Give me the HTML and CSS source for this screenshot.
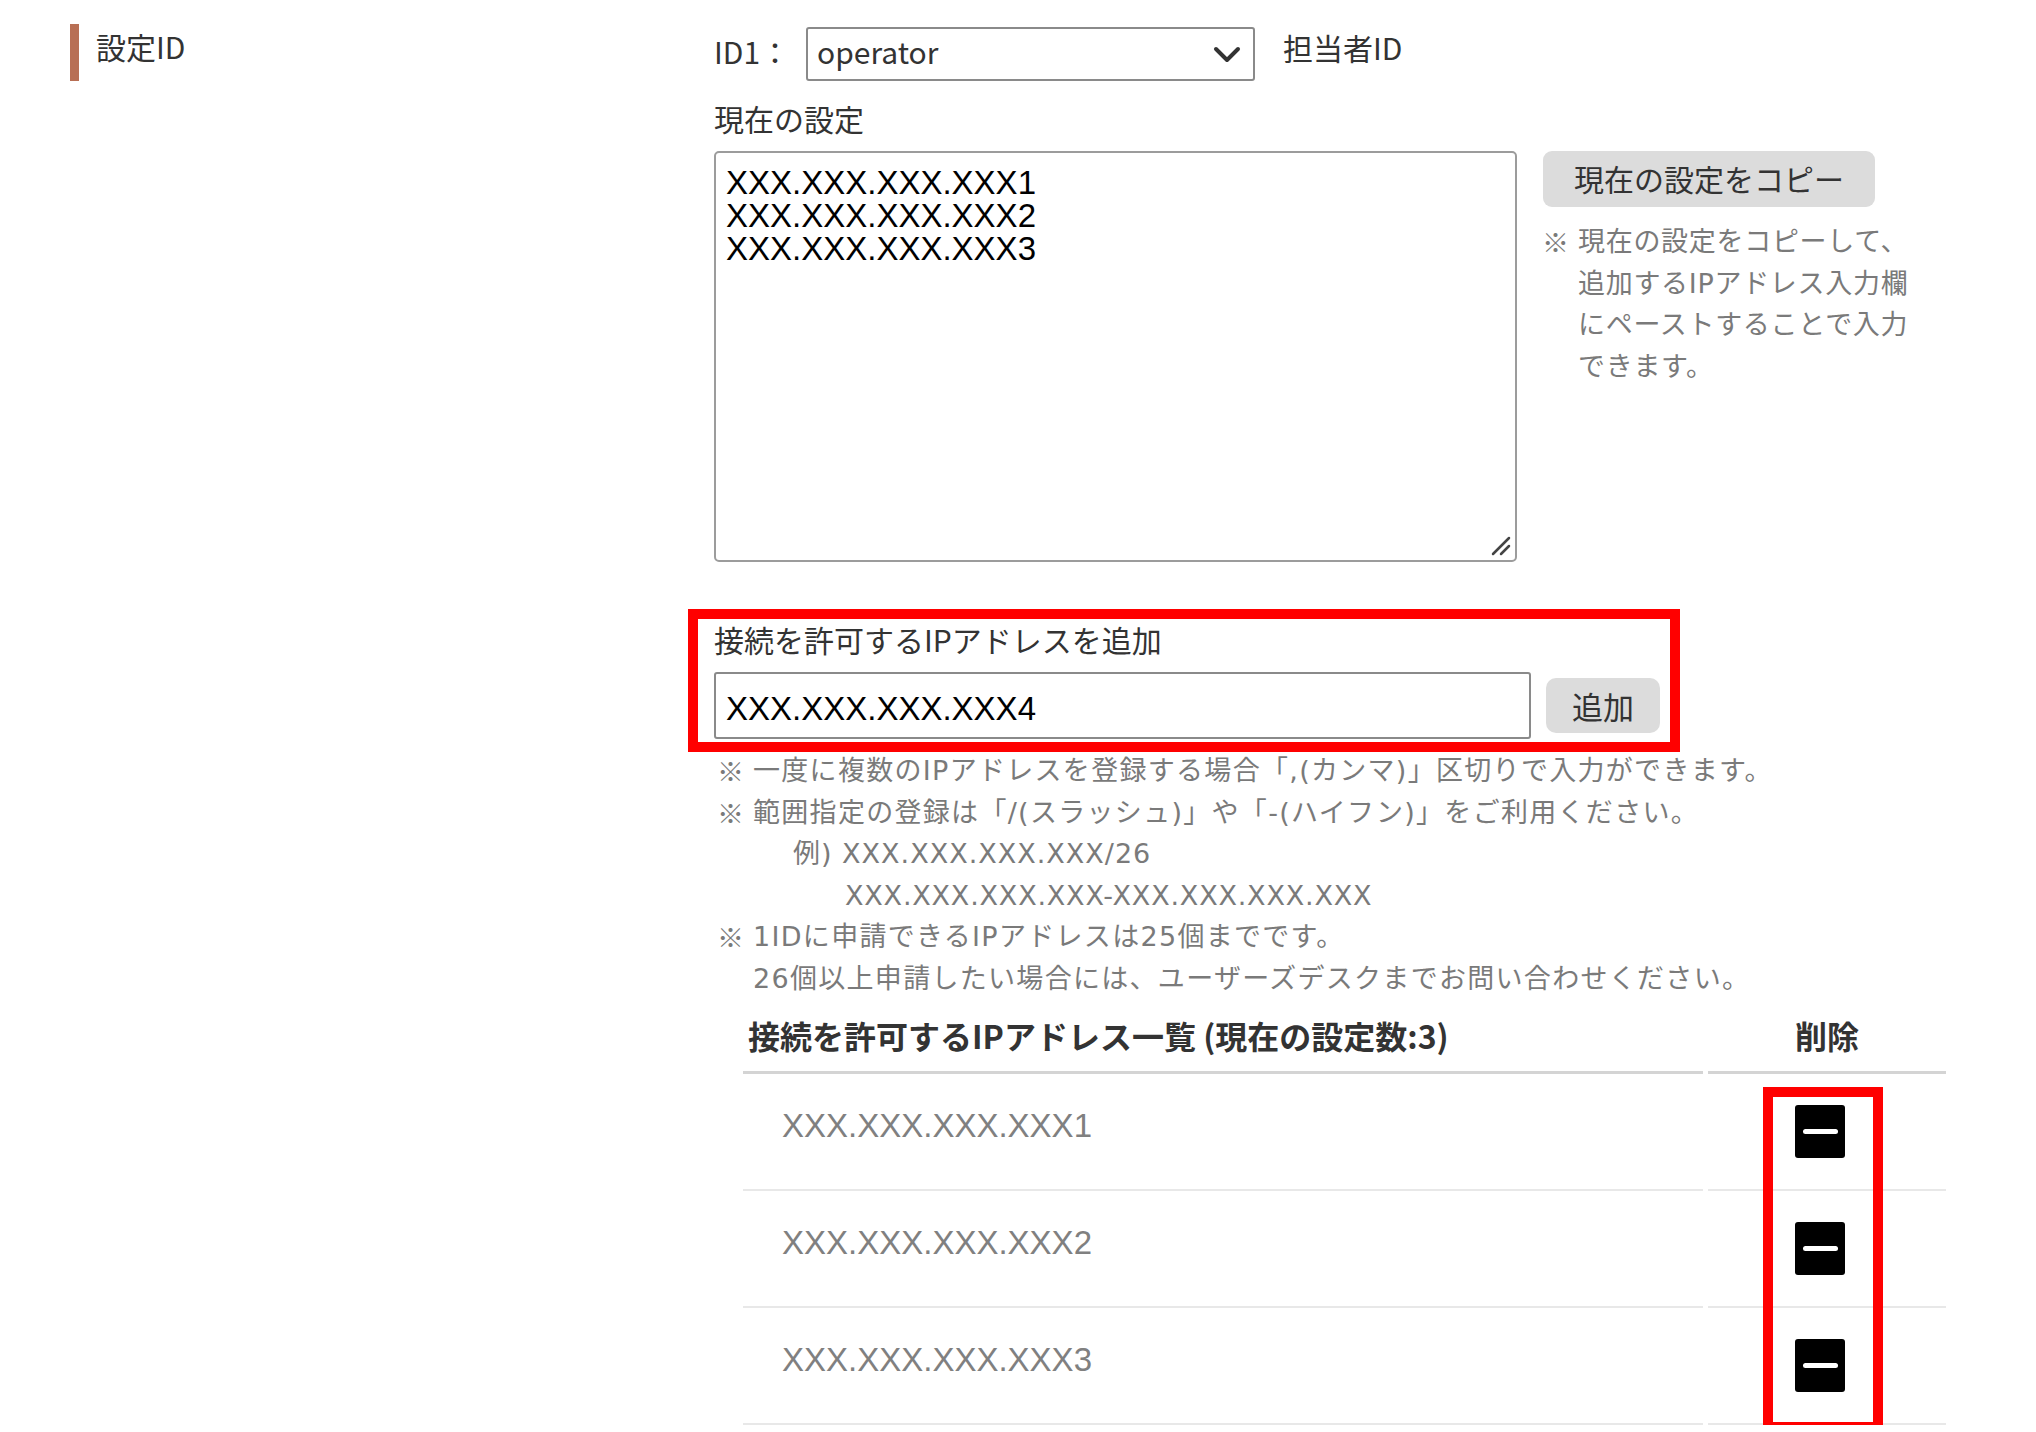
FILE: index.html
```html
<!DOCTYPE html>
<html lang="ja">
<head>
    <meta charset="UTF-8">
    <title>接続を許可するIPアドレス設定</title>
    <link rel="stylesheet" href="styles.css">
</head>
<body>
    <div class="page">
        <div class="side">
            <h2 class="section-title">設定ID</h2>
        </div>

        <div class="main">
            <div class="id-row">
                <span class="id-label">ID1：</span>
                <div class="select-wrap">
                    <select class="id-select">
                        <option>operator</option>
                    </select>
                    <svg class="chevron" width="28" height="17" viewBox="0 0 28 17">
                        <polyline points="3,3 14,14 25,3" fill="none" stroke="#333" stroke-width="4" stroke-linecap="round" stroke-linejoin="round"/>
                    </svg>
                </div>
                <span class="id-note">担当者ID</span>
            </div>

            <div class="field-label">現在の設定</div>
            <div class="current-row">
                <div class="list-wrap">
                    <textarea class="current-list" readonly>XXX.XXX.XXX.XXX1
XXX.XXX.XXX.XXX2
XXX.XXX.XXX.XXX3</textarea>
                    <svg class="grip" width="22" height="22" viewBox="0 0 22 22">
                        <line x1="4" y1="20" x2="20" y2="4" stroke="#444" stroke-width="2.5" stroke-linecap="round"/>
                        <line x1="12" y1="20" x2="20" y2="12" stroke="#444" stroke-width="2.5" stroke-linecap="round"/>
                    </svg>
                </div>
                <div class="copy-col">
                    <button class="btn copy-btn">現在の設定をコピー</button>
                    <p class="side-note">
                        <span class="mark">※</span>
                        <span>現在の設定をコピーして、<br>追加するIPアドレス入力欄<br>にペーストすることで入力<br>できます。</span>
                    </p>
                </div>
            </div>

            <div class="add-box">
                <div class="add-label">接続を許可するIPアドレスを追加</div>
                <div class="add-row">
                    <input class="add-input" type="text" value="XXX.XXX.XXX.XXX4">
                    <button class="btn add-btn">追加</button>
                </div>
            </div>

            <ul class="notes">
                <li><span class="mark">※</span><span>一度に複数のIPアドレスを登録する場合「,(カンマ)」区切りで入力ができます。</span></li>
                <li><span class="mark">※</span><span>範囲指定の登録は「/(スラッシュ)」や「-(ハイフン)」をご利用ください。</span></li>
                <li class="ex">例) XXX.XXX.XXX.XXX/26</li>
                <li class="ex-cont">XXX.XXX.XXX.XXX-XXX.XXX.XXX.XXX</li>
                <li><span class="mark">※</span><span>1IDに申請できるIPアドレスは25個までです。</span></li>
                <li class="cont">26個以上申請したい場合には、ユーザーズデスクまでお問い合わせください。</li>
            </ul>

            <div class="ip-table">
                <div class="ip-row ip-head">
                    <div class="cell">接続を許可するIPアドレス一覧 (現在の設定数:3)</div>
                    <div class="cell del-cell">削除</div>
                </div>
                <div class="ip-row">
                    <div class="cell ip-cell">XXX.XXX.XXX.XXX1</div>
                    <div class="cell del-cell"><button class="del"><span></span></button></div>
                </div>
                <div class="ip-row">
                    <div class="cell ip-cell">XXX.XXX.XXX.XXX2</div>
                    <div class="cell del-cell"><button class="del"><span></span></button></div>
                </div>
                <div class="ip-row">
                    <div class="cell ip-cell">XXX.XXX.XXX.XXX3</div>
                    <div class="cell del-cell"><button class="del"><span></span></button></div>
                </div>
                <div class="highlight"></div>
            </div>
        </div>
    </div>
</body>
</html>
```

FILE: styles.css
```css
body { margin: 0; background: #fff; color: #333; font-family: "Noto Sans CJK JP", "Noto Sans", sans-serif; }
.page { display: grid; grid-template-columns: 644px 1fr; padding: 24px 0 0 70px; }

.section-title { margin: 0; height: 57px; border-left: 9px solid #b86f54; padding-left: 17px; font-size: 30px; font-weight: normal; line-height: 45px; }

.id-row { display: flex; align-items: center; height: 60px; font-size: 30px; }
.id-label { width: 92px; padding-bottom: 7px; }
.select-wrap { position: relative; }
.id-select { width: 449px; height: 54px; box-sizing: border-box; border: 2px solid #8a8a8a; border-radius: 3px; padding: 0 50px 6px 9px; background: #fff; color: #333; font-family: inherit; font-size: 30px; appearance: none; -webkit-appearance: none; }
.chevron { position: absolute; right: 14px; top: 19px; pointer-events: none; }
.id-note { margin-left: 28px; padding-bottom: 14px; }

.field-label { margin-top: 12px; font-size: 30px; line-height: 45px; }

.current-row { display: flex; align-items: flex-start; gap: 26px; margin-top: 10px; }
.list-wrap { position: relative; }
.current-list { display: block; width: 803px; height: 411px; box-sizing: border-box; border: 2px solid #9c9c9c; border-radius: 5px; padding: 13px 10px; margin: 0; resize: none; font-family: "Liberation Sans", Arial, sans-serif; font-size: 33px; line-height: 33px; color: #000; }
.grip { position: absolute; right: 6px; bottom: 6px; }
.copy-col { width: 420px; }
.btn { border: none; background: #dcdcdc; color: #333; font-family: inherit; cursor: pointer; }
.copy-btn { width: 332px; height: 56px; border-radius: 9px; font-size: 30px; padding-bottom: 4px; }
.side-note { display: flex; margin: 14px 0 0 -1px; font-family: "DejaVu Sans", "Noto Sans CJK JP", sans-serif; font-size: 27px; line-height: 41.5px; color: #7a7a7a; white-space: nowrap; }
.mark { width: 36px; flex-shrink: 0; font-family: "Noto Sans CJK JP", sans-serif; }
.side-note .mark + span { letter-spacing: 0.7px; }

.add-box { width: 992px; box-sizing: border-box; margin: 47px 0 0 -26px; border: 10px solid #ff0000; padding: 0 10px 3px 16px; }
.add-label { font-size: 30px; line-height: 40px; }
.add-row { display: flex; align-items: center; gap: 15px; margin-top: 13px; }
.add-input { width: 817px; height: 67px; box-sizing: border-box; border: 2px solid #8a8a8a; border-radius: 3px; padding: 6px 10px 0; font-family: "Liberation Sans", Arial, sans-serif; font-size: 33px; color: #000; }
.add-btn { width: 114px; height: 55px; border-radius: 10px; font-size: 31px; }

.notes { list-style: none; margin: -2px 0 0; padding: 0 0 0 3px; font-family: "DejaVu Sans", "Noto Sans CJK JP", sans-serif; font-size: 27px; line-height: 41.5px; color: #7a7a7a; letter-spacing: 1.3px; }
.notes li { display: flex; white-space: nowrap; }
.notes .mark { width: 36px; letter-spacing: 0; }
.notes .ex { padding-left: 76px; letter-spacing: 1px; }
.notes .ex-cont { padding-left: 128px; letter-spacing: 0.8px; }
.notes .cont { padding-left: 36px; }

.ip-table { position: relative; width: 1203px; margin: 12px 0 0 29px; }
.ip-row { display: grid; grid-template-columns: 960px 238px; column-gap: 5px; }
.cell { box-sizing: border-box; }
.ip-head .cell { padding: 0 0 12px 5px; border-bottom: 3px solid #d4d4d4; font-size: 32px; font-weight: bold; line-height: 48px; }
.ip-head .del-cell { padding-left: 0; text-align: center; }
.ip-row:not(.ip-head) .cell { display: flex; align-items: center; height: 117px; border-bottom: 2px solid #e8e8e8; }
.ip-cell { padding: 0 0 12px 39px; font-family: "Liberation Sans", Arial, sans-serif; font-size: 33px; color: #808080; }
.ip-row:not(.ip-head) .del-cell { justify-content: center; padding-right: 14px; }
.del { display: flex; align-items: center; justify-content: center; width: 50px; height: 53px; padding: 0; border: none; border-radius: 3px; background: #000; cursor: pointer; }
.del span { display: block; width: 35px; height: 5px; border-radius: 3px; background: #fff; }

.highlight { position: absolute; left: 1020px; top: 76px; width: 120px; height: 345px; box-sizing: border-box; border: 10px solid #ff0000; pointer-events: none; }
```
